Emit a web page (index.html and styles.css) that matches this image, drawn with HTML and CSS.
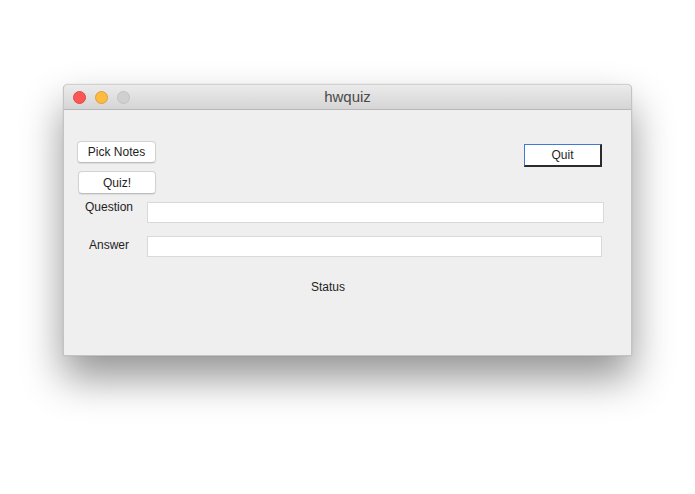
FILE: index.html
```html
<!DOCTYPE html>
<html>
<head>
<meta charset="utf-8">
<title>hwquiz</title>
<link rel="stylesheet" href="styles.css">
</head>
<body>
<div class="desk">
  <div class="window">
    <div class="titlebar">
      <div class="lights">
        <span class="light red"></span>
        <span class="light yellow"></span>
        <span class="light gray"></span>
      </div>
      <div class="title">hwquiz</div>
    </div>
    <div class="content">
      <div class="row-top">
        <div class="left-col">
          <button class="btn pick">Pick Notes</button>
          <button class="btn quiz">Quiz!</button>
        </div>
        <button class="btn-quit">Quit</button>
      </div>
      <div class="field q">
        <label class="lbl lbl-q">Question</label>
        <div class="input wide"></div>
      </div>
      <div class="field a">
        <label class="lbl lbl-a">Answer</label>
        <div class="input"></div>
      </div>
      <div class="status">Status</div>
    </div>
  </div>
</div>
</body>
</html>
```
FILE: styles.css
```css
html, body {
  margin: 0;
  padding: 0;
  background: #ffffff;
  width: 695px;
  height: 494px;
  overflow: hidden;
  font-family: "Liberation Sans", Arial, sans-serif;
}
.desk {
  padding: 84px 0 0 63px;
}
.window {
  width: 569px;
  height: 272px;
  box-sizing: border-box;
  background: #efefef;
  border: 1px solid #c4c4c4;
  border-top-color: #d0d0d0;
  border-radius: 5px 5px 0 0;
  box-shadow: 0 22px 40px rgba(0,0,0,0.42), 0 0 1px rgba(0,0,0,0.3);
  overflow: hidden;
}
.titlebar {
  height: 24px;
  background: linear-gradient(#ebebeb, #d5d5d5);
  border-bottom: 1px solid #b9b9b9;
  display: flex;
  align-items: center;
  position: relative;
}
.lights {
  display: flex;
  gap: 9px;
  padding-left: 9px;
}
.light {
  width: 13px;
  height: 13px;
  border-radius: 50%;
  box-sizing: border-box;
}
.red { background: #fc5753; border: 1px solid #df4744; }
.yellow { background: #fdbc40; border: 1px solid #de9f34; }
.gray { background: #d0d0d0; border: 1px solid #c2c2c2; }
.title {
  position: absolute;
  left: 0;
  right: 0;
  top: 3px;
  text-align: center;
  font-size: 15px;
  color: #4a4a4a;
}
.content {
  display: flex;
  flex-direction: column;
  align-items: flex-start;
  font-size: 12px;
  color: #1e1e1e;
}
.row-top {
  display: flex;
  justify-content: space-between;
  align-items: flex-start;
  width: 100%;
  box-sizing: border-box;
  padding-right: 29px;
}
.left-col {
  display: flex;
  flex-direction: column;
  align-items: flex-start;
}
.btn {
  font-family: "Liberation Sans", Arial, sans-serif;
  font-size: 12px;
  color: #1e1e1e;
  background: #ffffff;
  border: 1px solid #d2d2d2;
  border-bottom-color: #bdbdbd;
  border-radius: 4px;
  box-shadow: 0 1px 1px rgba(0,0,0,0.08);
  padding: 0;
  box-sizing: border-box;
}
.pick {
  margin: 31px 0 0 13px;
  width: 79px;
  height: 22px;
}
.quiz {
  margin: 8px 0 0 14px;
  width: 78px;
  height: 23px;
}
.btn-quit {
  margin-top: 34px;
  width: 78px;
  height: 23px;
  box-sizing: border-box;
  padding: 0 0 1px 0;
  background: #ffffff;
  font-family: "Liberation Sans", Arial, sans-serif;
  font-size: 12px;
  color: #1e1e1e;
  border-style: solid;
  border-width: 1px 2px 2px 1px;
  border-color: #3f78d6 #2b2b2b #2b2b2b #3f78d6;
  border-radius: 0;
}
.field {
  display: flex;
  align-items: flex-start;
}
.q { margin-top: 8px; }
.a { margin-top: 13px; }
.lbl {
  width: 62px;
  margin-left: 14px;
  margin-right: 7px;
  text-align: center;
  line-height: 14px;
}
.lbl-q { margin-top: -2px; }
.lbl-a { margin-top: 2px; }
.input {
  width: 455px;
  height: 21px;
  box-sizing: border-box;
  background: #ffffff;
  border: 1px solid #d9d9d9;
}
.input.wide { width: 457px; }
.status {
  margin: 23px 0 0 247px;
  line-height: 14px;
}
```
